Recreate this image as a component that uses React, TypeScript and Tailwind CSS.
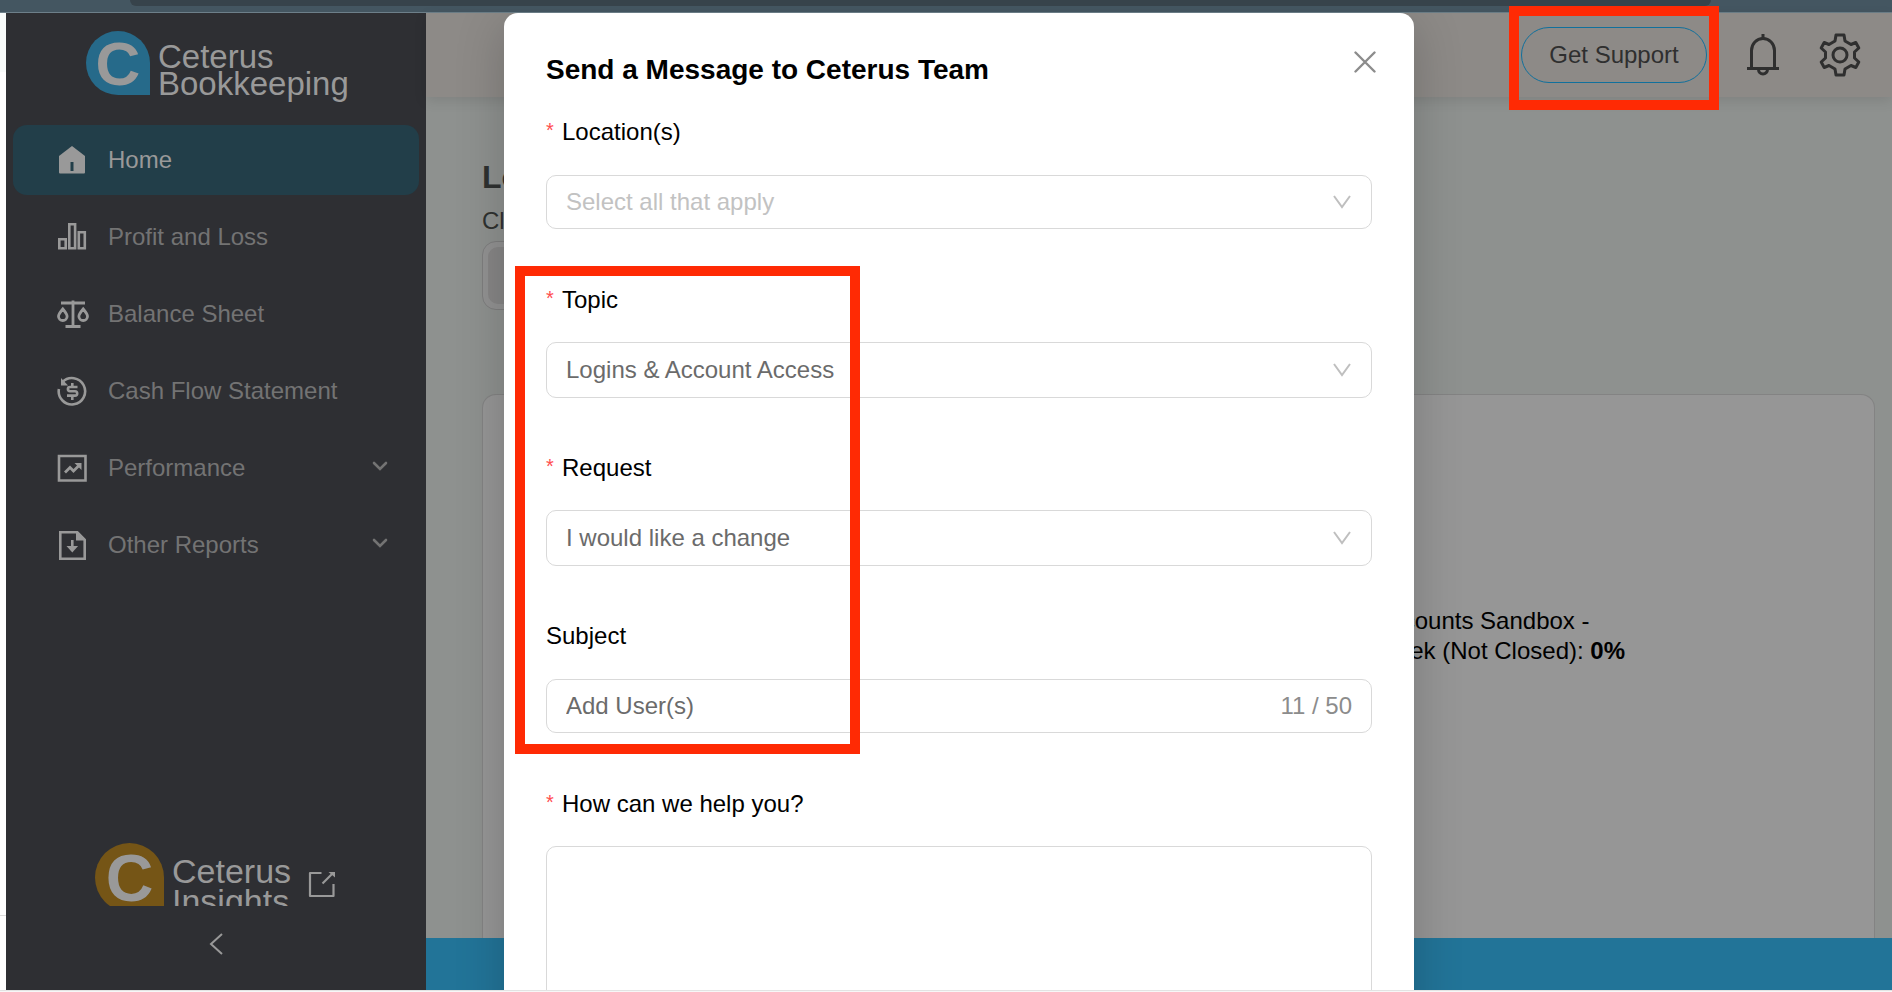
import { useState } from "react";
import type { ReactNode } from "react";

function HomeIcon() {
  return (
    <svg width="32" height="32" viewBox="0 0 32 32" fill="none">
      <path d="M16 2 3 12v16.5a1 1 0 0 0 1 1h24a1 1 0 0 0 1-1V12Z" fill="#999999" />
      <path d="M14.5 18h3v9h-3Z" fill="#223e49" />
    </svg>
  );
}

function BarsIcon() {
  return (
    <svg width="32" height="32" viewBox="0 0 32 32" fill="none" stroke="#999999" strokeWidth="2.6">
      <path d="M3.3 18.3h6.4v9H3.3zM13.3 3.3h5.8v24h-5.8zM22.8 11.300h6v16h-6z" />
    </svg>
  );
}

function ScaleIcon() {
  return (
    <svg width="34" height="32" viewBox="0 0 34 32" fill="none" stroke="#999999" strokeWidth="2.8">
      <path d="M5 5h24M17 2.500v25M9.500 28.500h15" />
      <path
        d="M6.800 11c-2.500 3-4.300 5.200-4.300 7.200a4.300 4.300 0 0 0 8.600 0c0-2-1.800-4.200-4.300-7.200ZM27.200 11c-2.500 3-4.300 5.200-4.300 7.200a4.300 4.300 0 0 0 8.600 0c0-2-1.800-4.200-4.300-7.200Z"
      />
    </svg>
  );
}

function CashIcon() {
  return (
    <svg width="32" height="32" viewBox="0 0 32 32" fill="none" stroke="#999999" strokeWidth="2.6">
      <path d="M6.5 7a13.2 13.2 0 1 1-3.600 7" />
      <path d="M5 3v7.500h7Z" fill="#999999" stroke="none" />
      <path d="M21.500 12h-7.500a2.100 2.100 0 0 0 0 4.200h5a2.200 2.200 0 0 1 0 4.400h-8M16.300 8v4M16.300 20.500v4.500" />
    </svg>
  );
}

function TrendIcon() {
  return (
    <svg width="32" height="32" viewBox="0 0 32 32" fill="none" stroke="#999999" strokeWidth="2.6">
      <path d="M3 4h26.500v24.500H3z" />
      <path d="m9 20.500 5-5 3.500 3.500 6-6" strokeWidth="2.800" />
      <path d="M18.500 11h7v7Z" fill="#999999" stroke="none" />
    </svg>
  );
}

function ReportIcon() {
  return (
    <svg width="32" height="32" viewBox="0 0 32 32" fill="none" stroke="#999999" strokeWidth="2.6">
      <path d="M4.300 3.300h17l7.400 7.400v19H4.300z" />
      <path d="M20 3h2l7 7v1.500h-9Z" fill="#999999" stroke="none" />
      <path d="M16.300 11v8" />
      <path d="M10.500 17h11.600l-5.800 6.500Z" fill="#999999" stroke="none" />
    </svg>
  );
}

function MenuChevron() {
  return (
    <svg width="18" height="12" viewBox="0 0 18 12" fill="none" stroke="#737373" strokeWidth="2.6" strokeLinecap="round" className="mb-1">
      <path d="m3 3 6 6 6-6" />
    </svg>
  );
}

function ExternalIcon() {
  return (
    <svg width="28" height="28" viewBox="0 0 28 28" fill="none" stroke="#999999" strokeWidth="2.2">
      <path d="M13.500 3H2v23h23.500V14" strokeLinejoin="round" />
      <path d="m14.500 13.500 10-10" />
      <path d="M20.500 2h6.500v5.500Z" fill="#999999" stroke="none" />
    </svg>
  );
}

function BellIcon() {
  return (
    <svg width="32" height="44" viewBox="0 0 32 44" fill="none" stroke="#2f2f2f" strokeWidth="3">
      <path d="M4.500 35V17.500a11.500 12 0 0 1 23 0V35" />
      <path d="M0 35.500h32M16 1v5" />
      <path d="M11.500 36.500a4.500 4.500 0 0 0 9 0" />
    </svg>
  );
}

function GearIcon() {
  return (
    <svg width="42" height="44" viewBox="0 0 42 44" fill="none" stroke="#2f2f2f" strokeWidth="3" strokeLinejoin="round">
      <path d="M17 2h8l1 6 6 3.500 4.800-2 3 5.500-4.300 4v6l4.300 4-3 5.500-4.800-2-6 3.500-1 6h-8l-1-6-6-3.500-4.800 2-3-5.500 4.300-4v-6l-4.300-4 3-5.500 4.800 2 6-3.500Z" />
      <circle cx="21" cy="22" r="7" />
    </svg>
  );
}

function SelectArrow() {
  return (
    <svg
      width="18"
      height="14"
      viewBox="0 0 18 14"
      fill="none"
      stroke="#bfbfbf"
      strokeWidth="2"
      className="pointer-events-none absolute top-1/2 right-[21px] -translate-y-1/2"
    >
      <path d="m1 1 8 11 8-11" />
    </svg>
  );
}

const menu: { label: string; icon: ReactNode; nested?: boolean }[] = [
  { label: "Home", icon: <HomeIcon /> },
  { label: "Profit and Loss", icon: <BarsIcon /> },
  { label: "Balance Sheet", icon: <ScaleIcon /> },
  { label: "Cash Flow Statement", icon: <CashIcon /> },
  { label: "Performance", icon: <TrendIcon />, nested: true },
  { label: "Other Reports", icon: <ReportIcon />, nested: true },
];

function Sidebar() {
  const [active, setActive] = useState("Home");

  return (
    <aside className="flex w-[420px] shrink-0 flex-col bg-[#2e2f33]">
      <div className="flex h-28 gap-2 pt-[18px] pl-20 text-[33px] leading-[27px] text-[#999999]">
        <div className="flex size-16 shrink-0 items-center justify-center rounded-full rounded-br-none bg-[#266a8a] text-[62px] font-bold">
          C
        </div>
        <div className="pt-3">
          Ceterus
          <br />
          Bookkeeping
        </div>
      </div>

      <nav className="flex flex-col gap-[7px] px-[7px]">
        {menu.map((item) => (
          <button
            key={item.label}
            onClick={() => setActive(item.label)}
            className={
              item.label === active
                ? "flex h-[70px] items-center rounded-[14px] bg-[#223e49] pr-[30px] pl-[43px] text-left text-[#999999]"
                : "flex h-[70px] items-center rounded-[14px] pr-[30px] pl-[43px] text-left text-[#737373]"
            }
          >
            <span className="flex w-[52px] shrink-0">{item.icon}</span>
            <span className="flex-1">{item.label}</span>
            {item.nested && <MenuChevron />}
          </button>
        ))}
      </nav>

      <a href="#insights" className="mt-auto flex h-[63px] gap-2 overflow-hidden pl-[89px] text-[34px] leading-[30px] text-[#999999]">
        <div className="flex size-[69px] shrink-0 items-center justify-center rounded-full rounded-br-none bg-[#755516] text-[66px] font-bold">
          C
        </div>
        <div className="pt-[13px]">
          Ceterus
          <br />
          Insights
        </div>
        <span className="pt-[27px] pl-[9px]">
          <ExternalIcon />
        </span>
      </a>
      <button aria-label="Collapse menu" className="flex h-[84px] items-center justify-center pb-2">
        <svg width="14" height="22" viewBox="0 0 14 22" fill="none" stroke="#999999" strokeWidth="2">
          <path d="M13 1 2 11l11 10" />
        </svg>
      </button>
    </aside>
  );
}

function Header() {
  return (
    <header className="flex h-[84px] shrink-0 items-center justify-end gap-10 bg-[#8d8a87] pr-[31px] shadow-[0_4px_12px_rgba(0,0,0,0.1)]">
      <div className="relative">
        <button className="h-14 w-[186px] rounded-full border border-[#11709c] text-[#2f2f2f]">Get Support</button>
        <div className="pointer-events-none absolute -inset-x-3 -top-[21px] -bottom-[27px] border-10 border-[#ff2a04]" />
      </div>
      <button aria-label="Notifications">
        <BellIcon />
      </button>
      <button aria-label="Settings">
        <GearIcon />
      </button>
    </header>
  );
}

function Dashboard() {
  return (
    <main className="flex min-h-0 flex-1 flex-col overflow-hidden pr-[17px] pl-14 text-[#2f3130]">
      <h1 className="mt-[60px] text-[32px] leading-10 font-bold">Location</h1>
      <p className="mt-2 leading-8">Closed</p>
      <div className="mt-1 h-[69px] w-80 rounded-[14px] border border-[#7e7e7e] bg-[#929292] p-[5px]">
        <div className="flex h-full items-center rounded-[10px] bg-[#878686] px-4">-</div>
      </div>
      <section className="mt-[84px] flex flex-1 flex-col rounded-t-[14px] border border-b-0 border-[#838383] bg-[#969696] pt-[211px] pr-[249px] text-black">
        <p className="self-end leading-[30px]">
          Accounts Sandbox -
          <br />
          Week (Not Closed): <b>0%</b>
        </p>
      </section>
    </main>
  );
}

function Field({ id, label, required, children }: { id: string; label: string; required?: boolean; children: ReactNode }) {
  return (
    <div>
      <label htmlFor={id} className="flex h-8 leading-8 text-black">
        {required && <span className="w-4 text-xl leading-7 text-[#ff4d4f]">*</span>}
        {label}
      </label>
      <div className="relative mt-[26px] flex h-14 items-center">{children}</div>
    </div>
  );
}

function SupportModal() {
  const [topic, setTopic] = useState("access");
  const [request, setRequest] = useState("change");
  const [subject, setSubject] = useState("Add User(s)");
  const [message, setMessage] = useState("");

  return (
    <div className="absolute inset-0 flex justify-center overflow-hidden pl-[26px]">
      <div
        role="dialog"
        aria-labelledby="support-title"
        className="relative h-[1200px] w-[910px] rounded-[14px] bg-white px-[42px] pt-[39px] shadow-[0_10px_50px_rgba(0,0,0,0.2)]"
      >
        <h2 id="support-title" className="text-[28px] leading-9 font-bold text-black">
          Send a Message to Ceterus Team
        </h2>
        <button aria-label="Close" className="absolute top-[38px] right-[38px]">
          <svg width="22" height="22" viewBox="0 0 22 22" fill="none" stroke="#8c8c8c" strokeWidth="2.4" strokeLinecap="round">
            <path d="m1.500 1.500 19 19M20.500 1.500l-19 19" />
          </svg>
        </button>

        <form className="mt-7 flex flex-col gap-[54px] text-[#6b6b6b]">
          <Field id="location" label="Location(s)" required>
            <select
              id="location"
              defaultValue=""
              className="h-[54px] w-full appearance-none rounded-[10px] border border-[#d9d9d9] bg-white px-[19px] text-[#c2c2c2]"
            >
              <option value="">Select all that apply</option>
            </select>
            <SelectArrow />
          </Field>

          <div className="relative flex flex-col gap-[54px]">
            <Field id="topic" label="Topic" required>
              <select
                id="topic"
                value={topic}
                onChange={(e) => setTopic(e.target.value)}
                className="h-14 w-full appearance-none rounded-[10px] border border-[#d9d9d9] bg-white px-[19px]"
              >
                <option value="access">Logins &amp; Account Access</option>
              </select>
              <SelectArrow />
            </Field>
            <Field id="request" label="Request" required>
              <select
                id="request"
                value={request}
                onChange={(e) => setRequest(e.target.value)}
                className="h-14 w-full appearance-none rounded-[10px] border border-[#d9d9d9] bg-white px-[19px]"
              >
                <option value="change">I would like a change</option>
              </select>
              <SelectArrow />
            </Field>
            <Field id="subject" label="Subject">
              <div className="flex h-[54px] w-full items-center rounded-[10px] border border-[#d9d9d9] px-[19px]">
                <input
                  id="subject"
                  value={subject}
                  maxLength={50}
                  onChange={(e) => setSubject(e.target.value)}
                  className="min-w-0 flex-1 outline-none"
                />
                <span className="text-[#8c8c8c]">{subject.length} / 50</span>
              </div>
            </Field>
            <div className="pointer-events-none absolute -top-[18px] -bottom-5 -left-[31px] w-[345px] border-10 border-[#ff2a04]" />
          </div>

          <Field id="message" label="How can we help you?" required>
            <textarea
              id="message"
              value={message}
              onChange={(e) => setMessage(e.target.value)}
              className="h-60 w-full resize-none self-start rounded-[10px] border border-[#d9d9d9] px-[19px] py-3"
            />
          </Field>
        </form>
      </div>
    </div>
  );
}

export default function App() {
  return (
    <div className="flex h-screen flex-col overflow-hidden bg-white font-['Liberation_Sans',Arial,sans-serif] text-2xl">
      <div className="h-[13px] shrink-0 border-b border-[#6d7f89] bg-[#445661] pr-[181px] pl-[130px]">
        <div className="h-[6px] rounded-b-[12px] bg-[#37434b]" />
      </div>
      <div className="relative flex min-h-0 flex-1">
        <div className="flex w-[6px] shrink-0 flex-col">
          <div className="h-[59px] bg-[#f8fbfa]" />
          <div className="h-[844px] border-b border-[#dcdcdc]" />
        </div>
        <Sidebar />
        <div className="flex min-w-0 flex-1 flex-col bg-[#8e918f]">
          <Header />
          <Dashboard />
          <footer className="h-[52px] shrink-0 bg-[#227498]" />
        </div>
        <SupportModal />
      </div>
      <div className="h-[2px] shrink-0 border-t border-[#e3e3e3] bg-[#f7f7f7]" />
    </div>
  );
}
